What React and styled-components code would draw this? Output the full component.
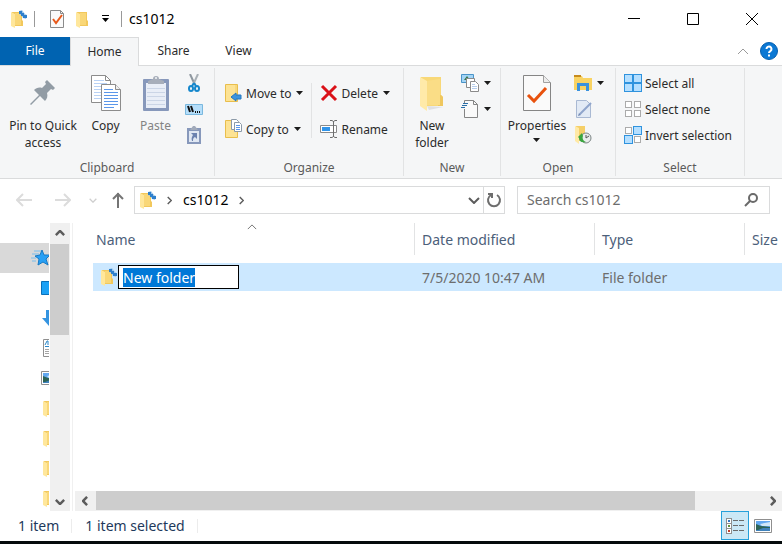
import React, {useEffect, useRef} from 'react'
import styled, {createGlobalStyle, css} from 'styled-components'

const colors = {
	accent: '#0063b1',
	ribbon: '#f5f6f7',
	line: '#dadbdc',
	divider: '#e2e3e4',
	text: '#2b2b2b',
	muted: '#5a5a5a',
	disabled: '#838383',
	header: '#4c607a',
	status: '#1e395b',
	row: '#cce8ff',
	track: '#f0f0f0',
	thumb: '#cdcdcd',
}

const GlobalStyle = createGlobalStyle`
	* {
		box-sizing: border-box;
	}
	body {
		margin: 0;
		background: #fff;
		font-family: "Noto Sans", "Open Sans", sans-serif;
		font-size: 14px;
		line-height: 20px;
	}
	button {
		margin: 0;
		padding: 0;
		border: 0;
		background: none;
		font: inherit;
		color: inherit;
	}
	svg {
		display: block;
		flex: none;
	}
`

/* Icons */

const Svg = ({w, h, children, ...props}) => (
	<svg width={w} height={h} viewBox={`0 0 ${w} ${h}`} fill="none" aria-hidden="true" {...props}>
		{children}
	</svg>
)

const FolderIcon = ({pinned}) => (
	<Svg w={17} h={18}>
		<path d="M2 2h10v8l1 1v5H2z" fill="#f2c85c" />
		<path d="M5 3h6v12H5z" fill="#f9d778" />
		<path d="M1 2l4 2v14l-4-2z" fill="#ffe79c" />
		{pinned && (
			<g fill="#2f80cc">
				<path d="M9 1l3-1 3 4 2 1-1 4-3-1-2-3-2-1z" fill="#9cc6ec" />
				<path d="M9 1h3v3H9zM11 3h3v3h-3zM13 5h4v3h-4z" />
			</g>
		)}
	</Svg>
)

const BigFolderIcon = () => (
	<Svg w={26} h={36}>
		<path d="M8 31l16 1-14 3z" fill="#dfe0e2" />
		<path d="M2 2h20v18l2 2v9H2z" fill="#f8d878" />
		<path d="M19 20l3 0 2 2v9h-5z" fill="#efc75f" />
		<path d="M7 6l14-2v26H7z" fill="#fadd86" />
		<path d="M1 2l7 4v30l-7-5z" fill="#ffeaa9" />
	</Svg>
)

const CheckDocIcon = () => (
	<Svg w={16} h={18}>
		<path d="M1.500.5h10l3 3v14h-13z" fill="#fafafa" stroke="#8b8b8b" />
		<path d="M11.500.5v3h3" stroke="#8b8b8b" />
		<path d="M4 9l3 4 6-8" stroke="#e8591b" strokeWidth="2" />
	</Svg>
)

const PropertiesIcon = () => (
	<Svg w={28} h={36}>
		<path d="M.5.5h20l7 7v28H.5z" fill="#fafafa" stroke="#858585" />
		<path d="M20.500.5v7h7" fill="#ececec" stroke="#a0a0a0" />
		<path d="M5 20l6 6 12-13" stroke="#e8520e" strokeWidth="3" />
	</Svg>
)

const Caret = () => (
	<Svg w={7} h={4}>
		<path d="M0 0h7L3.500 4z" fill="#1c1c1c" />
	</Svg>
)

const QuickCaret = () => (
	<Svg w={7} h={7}>
		<path d="M0 0h7v1H0zM0 3h7L3.500 7z" fill="#000" />
	</Svg>
)

const PinIcon = () => (
	<Svg w={26} h={36}>
		<path d="M17 5l8 8-2 2-2-1-4 4c1 3 0 6-2 8l-5-5-9 9-1-1 9-9-5-5c2-2 5-3 8-2l4-4-1-2z" fill="#929ca5" />
	</Svg>
)

const CopyIcon = () => (
	<Svg w={30} h={36}>
		<path d="M.5.5h14l5 5v22H.5z" fill="#fff" stroke="#8c8c8c" />
		<path d="M14.500.5v5h5" stroke="#8c8c8c" />
		<path d="M3 5.500h10M3 8.500h13M3 11.500h13M3 14.500h13M3 17.500h13M3 20.500h13M3 23.500h13" stroke="#b9d2f5" />
		<path d="M10.500 9.500h14l5 5v21h-19z" fill="#fff" stroke="#8c8c8c" />
		<path d="M24.500 9.500v5h5" fill="#eee" stroke="#8c8c8c" />
		<path d="M13 14.500h9M13 17.500h14M13 20.500h14M13 23.500h14M13 26.500h14M13 29.500h14M13 32.500h10" stroke="#5b97ea" />
	</Svg>
)

const PasteIcon = () => (
	<Svg w={26} h={36}>
		<rect y="4" width="26" height="32" rx="1" fill="#8798bb" />
		<path d="M3 8h20v25H3z" fill="#e9eef7" />
		<path d="M4 13.500h18M4 17.500h18M4 21.500h18M4 25.500h18M4 29.500h18" stroke="#cbd5e6" />
		<path d="M5 9V6l5-2a3 3 0 0 1 6 0l5 2v3z" fill="#a7aeba" />
		<circle cx="13" cy="3" r="1" fill="#f5f6f7" />
	</Svg>
)

const CutIcon = () => (
	<Svg w={18} h={18}>
		<path d="M5 0l5 11" stroke="#8e979f" strokeWidth="2" />
		<path d="M13 0L8 11" stroke="#a9b0b6" strokeWidth="2" />
		<path d="M9 9l-2 3m2-3l2 3" stroke="#1587cc" strokeWidth="2" />
		<ellipse cx="6" cy="14.500" rx="2" ry="2.500" stroke="#1587cc" strokeWidth="2" />
		<ellipse cx="12" cy="14.500" rx="2" ry="2.500" stroke="#1587cc" strokeWidth="2" />
	</Svg>
)

const CopyPathIcon = () => (
	<Svg w={18} h={11}>
		<path d="M.5.5h17v10H.5z" fill="#b5defa" stroke="#7ab8de" />
		<path d="M3 2l2 6M6 2l2 6" stroke="#111" strokeWidth="2" />
		<path d="M10 7h1v2h-1zM12 7h1v2h-1zM14 7h1v2h-1z" fill="#111" />
	</Svg>
)

const ShortcutIcon = () => (
	<Svg w={18} h={18}>
		<path d="M2 2h14v16H2z" fill="#8798bb" />
		<path d="M4 5h10v11H4z" fill="#dfe7f3" />
		<path d="M5 4l3-4h2l3 4z" fill="#a1aaba" />
		<path d="M6 7h6v6l-2-2c-2 1-2 2-2 4H7c-1-3 0-4 1-6z" fill="#6b82b0" />
	</Svg>
)

const MoveIcon = () => (
	<Svg w={18} h={20}>
		<path d="M.5 1.500h12v17H.5z" fill="#fde394" stroke="#e9be4c" />
		<path d="M11 2v15" stroke="#f1cd67" />
		<path d="M6 14l5-4v2h5v4h-5v2z" fill="#3c94de" stroke="#2478c0" />
	</Svg>
)

const CopyToIcon = () => (
	<Svg w={18} h={20}>
		<path d="M.5 1.500h12v17H.5z" fill="#fde394" stroke="#e9be4c" />
		<path d="M6.500.5h5l2 2v8h-7z" fill="#fff" stroke="#8c9aa8" />
		<path d="M9.500 3.500h5l2 2v7h-7z" fill="#fff" stroke="#8c9aa8" />
		<path d="M11 6.500h4M11 8.500h4M11 10.500h4" stroke="#5b97ea" />
	</Svg>
)

const DeleteIcon = () => (
	<Svg w={18} h={18}>
		<path d="M2 2l14 14M16 2L2 16" stroke="#da1118" strokeWidth="3" />
	</Svg>
)

const RenameIcon = () => (
	<Svg w={18} h={20}>
		<path d="M.5 6.500h16v7H.5z" fill="#fff" stroke="#8a8a8a" />
		<path d="M2 8h8v4H2z" fill="#2f94ea" />
		<path d="M10 1.500h2l1.500 1 1.500-1h2M10 18.500h2l1.500-1 1.500 1h2M13.500 2v16" stroke="#6d6d6d" />
	</Svg>
)

const NewItemIcon = () => (
	<Svg w={18} h={18}>
		<path d="M.5.5h12v8H.5z" fill="#a4d4f5" stroke="#4a94c8" />
		<path d="M3 6l3-4 3 4z" fill="#34764a" />
		<path d="M5.500 4.500h8v9h-8z" fill="#fff" stroke="#8a8a8a" />
		<path d="M9.500 7.500h5l3 3v7h-8z" fill="#fff" stroke="#8a8a8a" />
		<path d="M11 10.500h3M11 12.500h5M11 14.500h5" stroke="#b6cdec" />
	</Svg>
)

const EasyAccessIcon = () => (
	<Svg w={18} h={20}>
		<path d="M3.500 1.500h9l4 4v13h-13z" fill="#fafafa" stroke="#858585" />
		<path d="M12.500 1.500v4h4" stroke="#858585" />
		<path d="M2 5.500h5M0 8.500h4" stroke="#f5f6f7" strokeWidth="3" />
		<path d="M2 4.500h5M1 6.500h5M0 8.500h4" stroke="#2b6fa8" />
	</Svg>
)

const OpenIcon = () => (
	<Svg w={18} h={18}>
		<path d="M0 2h8l1 2h9v12H0z" fill="#f9d363" />
		<path d="M0 1h7v2H0z" fill="#c78b1d" />
		<path d="M3 17V9h12v8h-3v-5H6v5z" fill="#3a92de" />
	</Svg>
)

const EditIcon = () => (
	<Svg w={18} h={18}>
		<path d="M2.500.5h10l4 4v13h-14z" fill="#e2eaf5" stroke="#a9b9d3" />
		<path d="M17 3L6 14" stroke="#8fa5cb" strokeWidth="2" />
		<path d="M4 16l1-3 2 2z" fill="#7389b3" />
	</Svg>
)

const HistoryIcon = () => (
	<Svg w={18} h={18}>
		<path d="M2 0h9v15H2z" fill="#f5cf68" />
		<path d="M1 0l4 2v16l-4-3z" fill="#ffe9a6" />
		<circle cx="12" cy="12" r="5" fill="#e9ecec" stroke="#7c8585" />
		<path d="M12 9v3l3-2" stroke="#555" />
		<path d="M4 11l4-4 1 3c-1 2 0 5 3 6-5 1-7-1-7-4z" fill="#3aa53f" />
	</Svg>
)

const onTile = {fill: '#b5dfff', stroke: '#2f93de'}
const offTile = {fill: '#fff', stroke: '#ababab'}

const TilesIcon = ({active}) => (
	<Svg w={18} h={18}>
		{[[0, 0], [9, 0], [0, 9], [9, 9]].map(([x, y], i) => {
			const on = active.includes(i)
			const size = on ? 8 : 6
			const inset = on ? 0 : 1
			return (
				<rect
					key={i}
					x={x + inset + 0.5}
					y={y + inset + 0.5}
					width={size}
					height={size}
					{...(on ? onTile : offTile)}
				/>
			)
		})}
	</Svg>
)

const HelpIcon = () => (
	<Svg w={18} h={18}>
		<circle cx="9" cy="9" r="8.500" fill="#0b78d4" stroke="#075fae" />
		<path d="M6.500 7a2.500 2.500 0 1 1 4 2c-1 .7-1.500 1-1.500 2" stroke="#fff" strokeWidth="2" />
		<path d="M8 12.500h2v2H8z" fill="#fff" />
	</Svg>
)

const arrows = {
	up: 'M1 6l5-5 5 5',
	down: 'M1 1l5 5 5-5',
	left: 'M6 1L1 6l5 5',
	right: 'M1 1l5 5-5 5',
}

const Chevron = ({to, size = 12, color = '#5c5c5c', weight = 2}) => {
	const flat = to === 'up' || to === 'down'
	const short = Math.round(size * 7 / 12)
	return (
		<svg
			width={flat ? size : short}
			height={flat ? short : size}
			viewBox={flat ? '0 0 12 7' : '0 0 7 12'}
			fill="none"
			aria-hidden="true"
		>
			<path d={arrows[to]} stroke={color} strokeWidth={weight} />
		</svg>
	)
}

const StarIcon = () => (
	<Svg w={22} h={18}>
		<path d="M1 5h7M3 2h7M0 9h5M1 12h4" stroke="#79bdec" />
		<path d="M11 1l2 5 6 0-4 4 2 6-5-3-5 3 1-6-4-3 5-1z" fill="#27a0f5" stroke="#1779c4" />
	</Svg>
)

const DesktopIcon = () => (
	<Svg w={18} h={18}>
		<path d="M.5 2.500h17v13H.5z" fill="#1ba1f5" stroke="#0b70b8" />
	</Svg>
)

const DownloadIcon = () => (
	<Svg w={18} h={18}>
		<path d="M5 1h6v8h4l-7 8-7-8h4z" fill="#3594e0" />
	</Svg>
)

const DocumentIcon = () => (
	<Svg w={18} h={18}>
		<path d="M2.500.5h11v17h-11z" fill="#fff" stroke="#8f8f8f" />
		<path d="M4 6l2-4h1v4M4 7.500h8" stroke="#2a87c9" />
		<path d="M4 10.500h8M4 12.500h8M4 14.500h8" stroke="#a5a5a5" />
	</Svg>
)

const PictureIcon = () => (
	<Svg w={18} h={14}>
		<path d="M.5.5h17v13H.5z" fill="#fff" stroke="#8f8f8f" />
		<path d="M2 2h14v10H2z" fill="#62a8f0" />
		<path d="M6 5l10-2v4H8z" fill="#cfe6f8" />
		<path d="M2 5l5 2 9 1v1H2z" fill="#2d6355" />
		<path d="M2 9h14v3H2z" fill="#3f82bb" />
		<path d="M2 9h7l-5 2H2z" fill="#2d6355" />
	</Svg>
)

const DetailsIcon = () => (
	<Svg w={18} h={16}>
		{['#3578c0', '#5f9038', '#c2402c'].map((fill, i) => (
			<g key={fill}>
				<rect x=".5" y={i * 5 + 0.5} width="5" height="5" fill="#fff" stroke="#8f8f8f" />
				<rect x="2" y={i * 5 + 2} width="2" height="2" fill={fill} />
				<path d={`M7 ${i * 5 + 2.5}h5M13 ${i * 5 + 2.5}h5`} stroke="#6b6b6b" />
			</g>
		))}
	</Svg>
)

const NavArrow = ({to, color}) => (
	<Svg w={16} h={16}>
		{to === 'left' && <path d="M16 8H1M7 2L1 8l6 6" stroke={color} strokeWidth="2" />}
		{to === 'right' && <path d="M0 8h15M9 2l6 6-6 6" stroke={color} strokeWidth="2" />}
		{to === 'up' && <path d="M8 16V1M3 7l5-5 5 5" stroke={color} strokeWidth="2" />}
	</Svg>
)

const RefreshIcon = () => (
	<Svg w={16} h={16}>
		<path d="M11 3a6 6 0 1 1-6 0" stroke="#6e6e6e" strokeWidth="2" />
		<path d="M2 2h4v4" stroke="#6e6e6e" strokeWidth="2" />
	</Svg>
)

const SearchIcon = () => (
	<Svg w={14} h={14}>
		<circle cx="9" cy="5" r="4" stroke="#6a6a6a" strokeWidth="2" />
		<path d="M6 8l-5 5" stroke="#6a6a6a" strokeWidth="2" />
	</Svg>
)

/* Window frame */

const Window = styled.div`
	display: flex;
	flex-direction: column;
	min-height: 100vh;
	border-bottom: 3px solid #050b0c;
	background: #fff;
	color: ${colors.text};
	cursor: default;
`

const TitleBar = styled.header`
	display: flex;
	align-items: center;
	height: 37px;
	padding: 0 1px 0 10px;
`

const QuickAccess = styled.div`
	display: flex;
	align-items: center;
	gap: 10px;
	height: 16px;
	margin: 0 7px;
	padding: 0 12px 0 14px;
	border: solid #999;
	border-width: 0 1px;
`

const Title = styled.h1`
	flex: 1;
	margin: 0;
	font-size: 14px;
	font-weight: 400;
	color: #000;
`

const WindowButton = styled.button`
	display: flex;
	align-items: center;
	justify-content: center;
	width: 59px;
	height: 36px;
`

const Tabs = styled.nav`
	display: flex;
	align-items: stretch;
	height: 29px;
	border-bottom: 1px solid ${colors.line};
	font-size: 12px;
`

const Tab = styled.button`
	min-width: ${p => p.$width}px;
	${p => p.$file && css`
		background: ${colors.accent};
		color: #fff;
	`}
	${p => p.$active && css`
		margin-bottom: -1px;
		border: 1px solid ${colors.line};
		border-bottom: 0;
		background: ${colors.ribbon};
	`}
`

const TabsEnd = styled.div`
	display: flex;
	align-items: center;
	gap: 11px;
	margin-left: auto;
	padding-right: 4px;
`

/* Ribbon */

const Ribbon = styled.section`
	display: flex;
	height: 113px;
	padding: 2px 0;
	border-bottom: 1px solid ${colors.line};
	background: ${colors.ribbon};
	font-size: 12px;
	line-height: 17px;
`

const Group = styled.div`
	display: flex;
	flex-direction: column;
	flex: none;
	width: ${p => p.$width}px;
	border-right: 1px solid ${colors.divider};
`

const GroupBody = styled.div`
	display: flex;
	flex: 1;
	padding: 0 ${p => p.$pad}px;
	gap: ${p => p.$gap || 0}px;
`

const GroupTitle = styled.h2`
	margin: 0;
	font-size: 12px;
	font-weight: 400;
	line-height: 16px;
	text-align: center;
	color: ${colors.muted};
`

const BigButton = styled.button`
	display: flex;
	flex-direction: column;
	align-items: center;
	gap: 6px;
	width: ${p => p.$width}px;
	padding-top: 7px;
	color: ${p => p.disabled ? colors.disabled : colors.text};
`

const Caption = styled.span`
	display: flex;
	flex-direction: column;
	align-items: center;
	gap: ${p => p.$gap || 0}px;
	white-space: nowrap;
`

const Stack = styled.div`
	display: flex;
	flex-direction: column;
	padding-top: ${p => p.$top || 2}px;
	padding-left: ${p => p.$left || 0}px;
`

const Divider = styled.div`
	width: 1px;
	height: 55px;
	margin-top: 15px;
	background: ${colors.divider};
`

const SmallButton = styled.button`
	display: flex;
	align-items: center;
	gap: 3px;
	height: ${p => p.$height || 26}px;
	white-space: nowrap;
	svg + svg,
	span + svg {
		margin-left: 2px;
	}
`

/* Address row */

const AddressRow = styled.div`
	display: flex;
	align-items: center;
	height: 44px;
	padding: 0 12px 2px 16px;
`

const History = styled.div`
	display: grid;
	grid-template-columns: 39px 34px 21px 24px;
	align-items: center;
	justify-items: start;
	flex: none;
`

const Address = styled.div`
	display: flex;
	align-items: center;
	flex: 371 1 371px;
	height: 28px;
	margin-right: 12px;
	padding-left: 4px;
	border: 1px solid ${colors.line};
	color: #000;
`

const Crumb = styled.button`
	padding: 0 11px;
`

const AddressEnd = styled.div`
	display: flex;
	align-items: center;
	align-self: stretch;
	gap: 3px;
	margin-left: auto;
`

const Refresh = styled.button`
	display: flex;
	align-items: center;
	align-self: stretch;
	padding: 0 2px;
	border-left: 1px solid ${colors.line};
`

const Search = styled.label`
	display: flex;
	align-items: center;
	flex: 253 1 253px;
	height: 28px;
	padding: 0 11px 0 9px;
	border: 1px solid ${colors.line};
`

const SearchInput = styled.input`
	flex: 1;
	min-width: 0;
	padding: 0;
	border: 0;
	outline: 0;
	background: none;
	font: inherit;
	&::placeholder {
		color: #6d6d6d;
		opacity: 1;
	}
`

/* Content */

const Content = styled.main`
	display: flex;
	flex: 1;
`

/* size containment keeps a long tree from stretching the window */
const Sidebar = styled.nav`
	flex: none;
	width: 50px;
	padding: 20px 1px 0 0;
	overflow: hidden;
	contain: size;
`

const SidebarItem = styled.button`
	display: flex;
	align-items: center;
	width: 100%;
	height: 30px;
	padding-left: ${p => p.$indent || 41}px;
	background: ${p => p.$active ? '#d9d9d9' : 'none'};
	overflow: hidden;
`

const ScrollButton = styled.button`
	display: flex;
	align-items: center;
	justify-content: center;
	width: 19px;
	height: 19px;
`

const Scrollbar = styled.div`
	display: flex;
	flex-direction: ${p => p.$vertical ? 'column' : 'row'};
	flex: none;
	${p => p.$vertical ? 'width: 20px' : 'height: 20px'};
	background: ${colors.track};
`

const Track = styled.div`
	flex: 1;
	${p => p.$vertical ? 'margin: 2px 0' : 'margin: 0 2px'};
`

const Thumb = styled.div`
	background: ${colors.thumb};
	${p => p.$vertical ? 'width: 19px; height: 37%' : 'height: 19px; width: 90%'};
`

const Pane = styled.div`
	display: flex;
	flex-direction: column;
	flex: 1;
	min-width: 0;
	margin-left: 2px;
	padding-left: 2px;
	border-left: 1px solid #f0f0f0;
`

const Files = styled.div`
	flex: 1;
	padding-left: 18px;
	overflow: hidden;
`

const Table = styled.table`
	width: 100%;
	table-layout: fixed;
	border-spacing: 0;
	tbody::before {
		content: '';
		display: block;
		height: 8px;
	}
`

const HeadCell = styled.th`
	position: relative;
	width: ${p => p.$width ? `${p.$width}px` : 'auto'};
	height: 32px;
	padding: 2px 0 0 ${p => p.$pad || 7}px;
	border-right: ${p => p.$width ? `1px solid ${colors.divider}` : 0};
	font-weight: 400;
	text-align: left;
	color: ${colors.header};
`

const SortMark = styled.span`
	position: absolute;
	top: 1px;
	left: 48%;
`

const Cell = styled.td`
	height: 28px;
	padding: ${p => p.$editing ? 0 : 2}px 0 0 7px;
	background: ${colors.row};
	color: #6d6d6d;
`

const NameBox = styled.div`
	display: flex;
	align-items: center;
	gap: 1px;
`

const RenameInput = styled.input`
	width: 121px;
	height: 24px;
	padding: 0 4px;
	border: 1px solid #000;
	outline: 0;
	background: #fff;
	font: inherit;
	line-height: 20px;
	color: #000;
	&::selection {
		background: #0078d7;
		color: #fff;
	}
`

/* Status bar */

const StatusBar = styled.footer`
	display: flex;
	align-items: center;
	height: 30px;
	padding: 0 5px;
	color: ${colors.status};
`

const StatusText = styled.span`
	padding: 0 12px 0 13px;
	border-right: 1px solid #ececec;
	line-height: 14px;
`

const Views = styled.div`
	display: flex;
	align-self: flex-start;
	margin-left: auto;
`

const ViewButton = styled.button`
	display: flex;
	align-items: center;
	justify-content: center;
	width: 28px;
	height: 29px;
	border: 1px solid ${p => p.$active ? '#26a0da' : 'transparent'};
	background: ${p => p.$active ? '#cbe8f6' : 'none'};
`

const selectOptions = [
	{label: 'Select all', active: [0, 1, 2, 3]},
	{label: 'Select none', active: []},
	{label: 'Invert selection', active: [1, 2]},
]

const pinnedPlaces = [
	{name: 'Quick access', icon: <StarIcon />, indent: 31, active: true},
	{name: 'Desktop', icon: <DesktopIcon />},
	{name: 'Downloads', icon: <DownloadIcon />},
	{name: 'Documents', icon: <DocumentIcon />},
	{name: 'Pictures', icon: <PictureIcon />},
	{name: 'Folder 1', icon: <FolderIcon />, indent: 42},
	{name: 'Folder 2', icon: <FolderIcon />, indent: 42},
	{name: 'Folder 3', icon: <FolderIcon />, indent: 42},
	{name: 'Folder 4', icon: <FolderIcon />, indent: 42},
]

const RibbonBar = () => (
	<Ribbon>
		<Group $width={215}>
			<GroupBody $pad={5}>
				<BigButton $width={76}>
					<PinIcon />
					<Caption><span>Pin to Quick</span><span>access</span></Caption>
				</BigButton>
				<BigButton $width={49}>
					<CopyIcon />
					<Caption>Copy</Caption>
				</BigButton>
				<BigButton $width={51} disabled>
					<PasteIcon />
					<Caption>Paste</Caption>
				</BigButton>
				<Stack $left={4}>
					<SmallButton aria-label="Cut"><CutIcon /></SmallButton>
					<SmallButton aria-label="Copy path"><CopyPathIcon /></SmallButton>
					<SmallButton aria-label="Paste shortcut"><ShortcutIcon /></SmallButton>
				</Stack>
			</GroupBody>
			<GroupTitle>Clipboard</GroupTitle>
		</Group>
		<Group $width={189}>
			<GroupBody $pad={10} $gap={8}>
				<Stack $top={7}>
					<SmallButton $height={36}><MoveIcon /><span>Move to</span><Caret /></SmallButton>
					<SmallButton $height={36}><CopyToIcon /><span>Copy to</span><Caret /></SmallButton>
				</Stack>
				<Divider />
				<Stack $top={7}>
					<SmallButton $height={36}><DeleteIcon /><span>Delete</span><Caret /></SmallButton>
					<SmallButton $height={36}><RenameIcon /><span>Rename</span></SmallButton>
				</Stack>
			</GroupBody>
			<GroupTitle>Organize</GroupTitle>
		</Group>
		<Group $width={97}>
			<GroupBody $pad={6} $gap={7}>
				<BigButton $width={44}>
					<BigFolderIcon />
					<Caption><span>New</span><span>folder</span></Caption>
				</BigButton>
				<Stack>
					<SmallButton aria-label="New item"><NewItemIcon /><Caret /></SmallButton>
					<SmallButton aria-label="Easy access"><EasyAccessIcon /><Caret /></SmallButton>
				</Stack>
			</GroupBody>
			<GroupTitle>New</GroupTitle>
		</Group>
		<Group $width={115}>
			<GroupBody $pad={2} $gap={3}>
				<BigButton $width={68}>
					<PropertiesIcon />
					<Caption $gap={4}><span>Properties</span><Caret /></Caption>
				</BigButton>
				<Stack>
					<SmallButton aria-label="Open"><OpenIcon /><Caret /></SmallButton>
					<SmallButton aria-label="Edit" disabled><EditIcon /></SmallButton>
					<SmallButton aria-label="History"><HistoryIcon /></SmallButton>
				</Stack>
			</GroupBody>
			<GroupTitle>Open</GroupTitle>
		</Group>
		<Group $width={129}>
			<GroupBody $pad={8}>
				<Stack>
					{selectOptions.map(({label, active}) => (
						<SmallButton key={label}>
							<TilesIcon active={active} />
							<span>{label}</span>
						</SmallButton>
					))}
				</Stack>
			</GroupBody>
			<GroupTitle>Select</GroupTitle>
		</Group>
	</Ribbon>
)

const FileTable = () => {
	const input = useRef(null)

	useEffect(() => {
		input.current.focus()
		input.current.select()
	}, [])

	return (
		<Table>
			<thead>
				<tr>
					<HeadCell $width={322} $pad={3}>
						Name
						<SortMark><Chevron to="up" size={10} weight={1} /></SortMark>
					</HeadCell>
					<HeadCell $width={180}>Date modified</HeadCell>
					<HeadCell $width={150}>Type</HeadCell>
					<HeadCell>Size</HeadCell>
				</tr>
			</thead>
			<tbody>
				<tr>
					<Cell $editing>
						<NameBox>
							<FolderIcon pinned />
							<RenameInput ref={input} aria-label="Folder name" defaultValue="New folder" spellCheck={false} />
						</NameBox>
					</Cell>
					<Cell>7/5/2020 10:47 AM</Cell>
					<Cell>File folder</Cell>
					<Cell />
				</tr>
			</tbody>
		</Table>
	)
}

const App = () => (
	<Window>
		<GlobalStyle />
		<TitleBar>
			<FolderIcon pinned />
			<QuickAccess>
				<button aria-label="Properties"><CheckDocIcon /></button>
				<button aria-label="New folder"><FolderIcon /></button>
				<button aria-label="Customize toolbar"><QuickCaret /></button>
			</QuickAccess>
			<Title>cs1012</Title>
			<WindowButton aria-label="Minimize">
				<Svg w={12} h={12}><path d="M0 5.500h12" stroke="#000" /></Svg>
			</WindowButton>
			<WindowButton aria-label="Maximize">
				<Svg w={12} h={12}><path d="M.5.5h11v11H.5z" stroke="#000" /></Svg>
			</WindowButton>
			<WindowButton aria-label="Close">
				<Svg w={12} h={12}><path d="M0 0l12 12M12 0L0 12" stroke="#000" /></Svg>
			</WindowButton>
		</TitleBar>
		<Tabs>
			<Tab $width={70} $file>File</Tab>
			<Tab $width={69} $active>Home</Tab>
			<Tab $width={69}>Share</Tab>
			<Tab $width={61}>View</Tab>
			<TabsEnd>
				<button aria-label="Collapse ribbon"><Chevron to="up" color="#9a9a9a" weight={1} /></button>
				<button aria-label="Help"><HelpIcon /></button>
			</TabsEnd>
		</Tabs>
		<RibbonBar />
		<AddressRow>
			<History>
				<button aria-label="Back" disabled><NavArrow to="left" color="#dcdcdc" /></button>
				<button aria-label="Forward" disabled><NavArrow to="right" color="#dcdcdc" /></button>
				<button aria-label="Recent locations"><Chevron to="down" size={8} color="#cfcfcf" /></button>
				<button aria-label="Up"><NavArrow to="up" color="#757575" /></button>
			</History>
			<Address>
				<FolderIcon pinned />
				<Crumb aria-label="Root"><Chevron to="right" size={9} /></Crumb>
				<button>cs1012</button>
				<Crumb aria-label="Subfolders"><Chevron to="right" size={9} /></Crumb>
				<AddressEnd>
					<button aria-label="Previous locations"><Chevron to="down" /></button>
					<Refresh aria-label="Refresh"><RefreshIcon /></Refresh>
				</AddressEnd>
			</Address>
			<Search>
				<SearchInput aria-label="Search" placeholder="Search cs1012" />
				<SearchIcon />
			</Search>
		</AddressRow>
		<Content>
			<Sidebar>
				{pinnedPlaces.map(({name, icon, indent, active}) => (
					<SidebarItem key={name} aria-label={name} $indent={indent} $active={active}>
						{icon}
					</SidebarItem>
				))}
			</Sidebar>
			<Scrollbar $vertical>
				<ScrollButton aria-label="Scroll up"><Chevron to="up" size={10} weight={3} /></ScrollButton>
				<Track $vertical><Thumb $vertical /></Track>
				<ScrollButton aria-label="Scroll down"><Chevron to="down" size={10} weight={3} /></ScrollButton>
			</Scrollbar>
			<Pane>
				<Files><FileTable /></Files>
				<Scrollbar>
					<ScrollButton aria-label="Scroll left"><Chevron to="left" size={10} weight={3} /></ScrollButton>
					<Track><Thumb /></Track>
					<ScrollButton aria-label="Scroll right"><Chevron to="right" size={10} weight={3} /></ScrollButton>
				</Scrollbar>
			</Pane>
		</Content>
		<StatusBar>
			<StatusText>1 item</StatusText>
			<StatusText>1 item selected</StatusText>
			<Views>
				<ViewButton aria-label="Details" $active><DetailsIcon /></ViewButton>
				<ViewButton aria-label="Large icons"><PictureIcon /></ViewButton>
			</Views>
		</StatusBar>
	</Window>
)

export default App
